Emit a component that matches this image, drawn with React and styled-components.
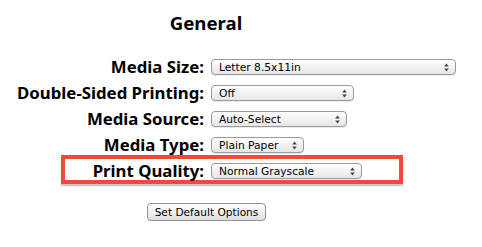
import React from 'react';
import styled, { createGlobalStyle } from 'styled-components';

const GlobalStyle = createGlobalStyle`
  html, body {
    margin: 0;
    padding: 0;
    background: #ffffff;
  }
  body {
    font-family: "DejaVu Sans", "Liberation Sans", sans-serif;
    color: #000;
  }
`;

const Page = styled.div`
  width: 412px;
  padding-top: 11px;
  display: flex;
  flex-direction: column;
`;

const Title = styled.h2`
  margin: 0;
  font-family: "Noto Sans", "DejaVu Sans", sans-serif;
  font-size: 18.6px;
  line-height: 24px;
  font-weight: bold;
  text-align: center;
`;

const Form = styled.div`
  margin-top: 19px;
  display: flex;
  flex-direction: column;
`;

const Row = styled.div`
  position: relative;
  display: flex;
  align-items: center;
  gap: 7px;
  height: 26px;
`;

const Highlight = styled.div`
  position: absolute;
  left: 61px;
  top: -3px;
  width: 342px;
  height: 29px;
  box-sizing: border-box;
  border: 4px solid #ee4a3e;
  box-shadow: 0 2px 1px rgba(0, 0, 0, 0.22);
  pointer-events: none;
`;

const Label = styled.div`
  position: relative;
  width: 204px;
  flex: none;
  text-align: right;
  font-family: "Noto Sans", "DejaVu Sans", sans-serif;
  font-size: 16.8px;
  line-height: 20px;
  font-weight: bold;
  white-space: nowrap;
`;

const Select = styled.div`
  position: relative;
  width: ${(p) => p.$width}px;
  height: 16px;
  box-sizing: border-box;
  flex: none;
  display: flex;
  align-items: center;
  justify-content: space-between;
  padding: 0 6px 0 7px;
  border: 1px solid #9a9a9a;
  border-radius: 4px;
  background: linear-gradient(#ffffff, #f3f3f3 50%, #e6e6e6);
  box-shadow: 0 1px 0 rgba(0, 0, 0, 0.08);
  font-size: 10.7px;
  white-space: nowrap;
`;

const Arrows = styled.svg`
  width: 5px;
  height: 9px;
  flex: none;
`;

const Footer = styled.div`
  margin-top: 19px;
  display: flex;
  justify-content: center;
`;

const Button = styled.button`
  width: 119px;
  height: 18px;
  padding: 0;
  box-sizing: border-box;
  border: 1px solid #959595;
  border-radius: 4px;
  background: linear-gradient(#ffffff, #f1f1f1 50%, #dedede);
  box-shadow: 0 1px 0 rgba(0, 0, 0, 0.08);
  font-family: inherit;
  font-size: 10.6px;
  color: #000;
  margin-left: 1px;
`;

const options = [
  { label: 'Media Size:', value: 'Letter 8.5x11in', width: 245 },
  { label: 'Double-Sided Printing:', value: 'Off', width: 143 },
  { label: 'Media Source:', value: 'Auto-Select', width: 136 },
  { label: 'Media Type:', value: 'Plain Paper', width: 93 },
  { label: 'Print Quality:', value: 'Normal Grayscale', width: 151, marked: true },
];

const UpDown = () => (
  <Arrows viewBox="0 0 5 9">
    <path d="M2.5 0.5 L4.8 3.5 L0.2 3.5 Z" fill="#444" />
    <path d="M2.5 8.5 L4.8 5.5 L0.2 5.5 Z" fill="#444" />
  </Arrows>
);

export default function App() {
  return (
    <>
      <GlobalStyle />
      <Page>
        <Title>General</Title>
        <Form>
          {options.map((o) => (
            <Row key={o.label}>
              {o.marked && <Highlight />}
              <Label>{o.label}</Label>
              <Select $width={o.width}>
                <span>{o.value}</span>
                <UpDown />
              </Select>
            </Row>
          ))}
        </Form>
        <Footer>
          <Button>Set Default Options</Button>
        </Footer>
      </Page>
    </>
  );
}
